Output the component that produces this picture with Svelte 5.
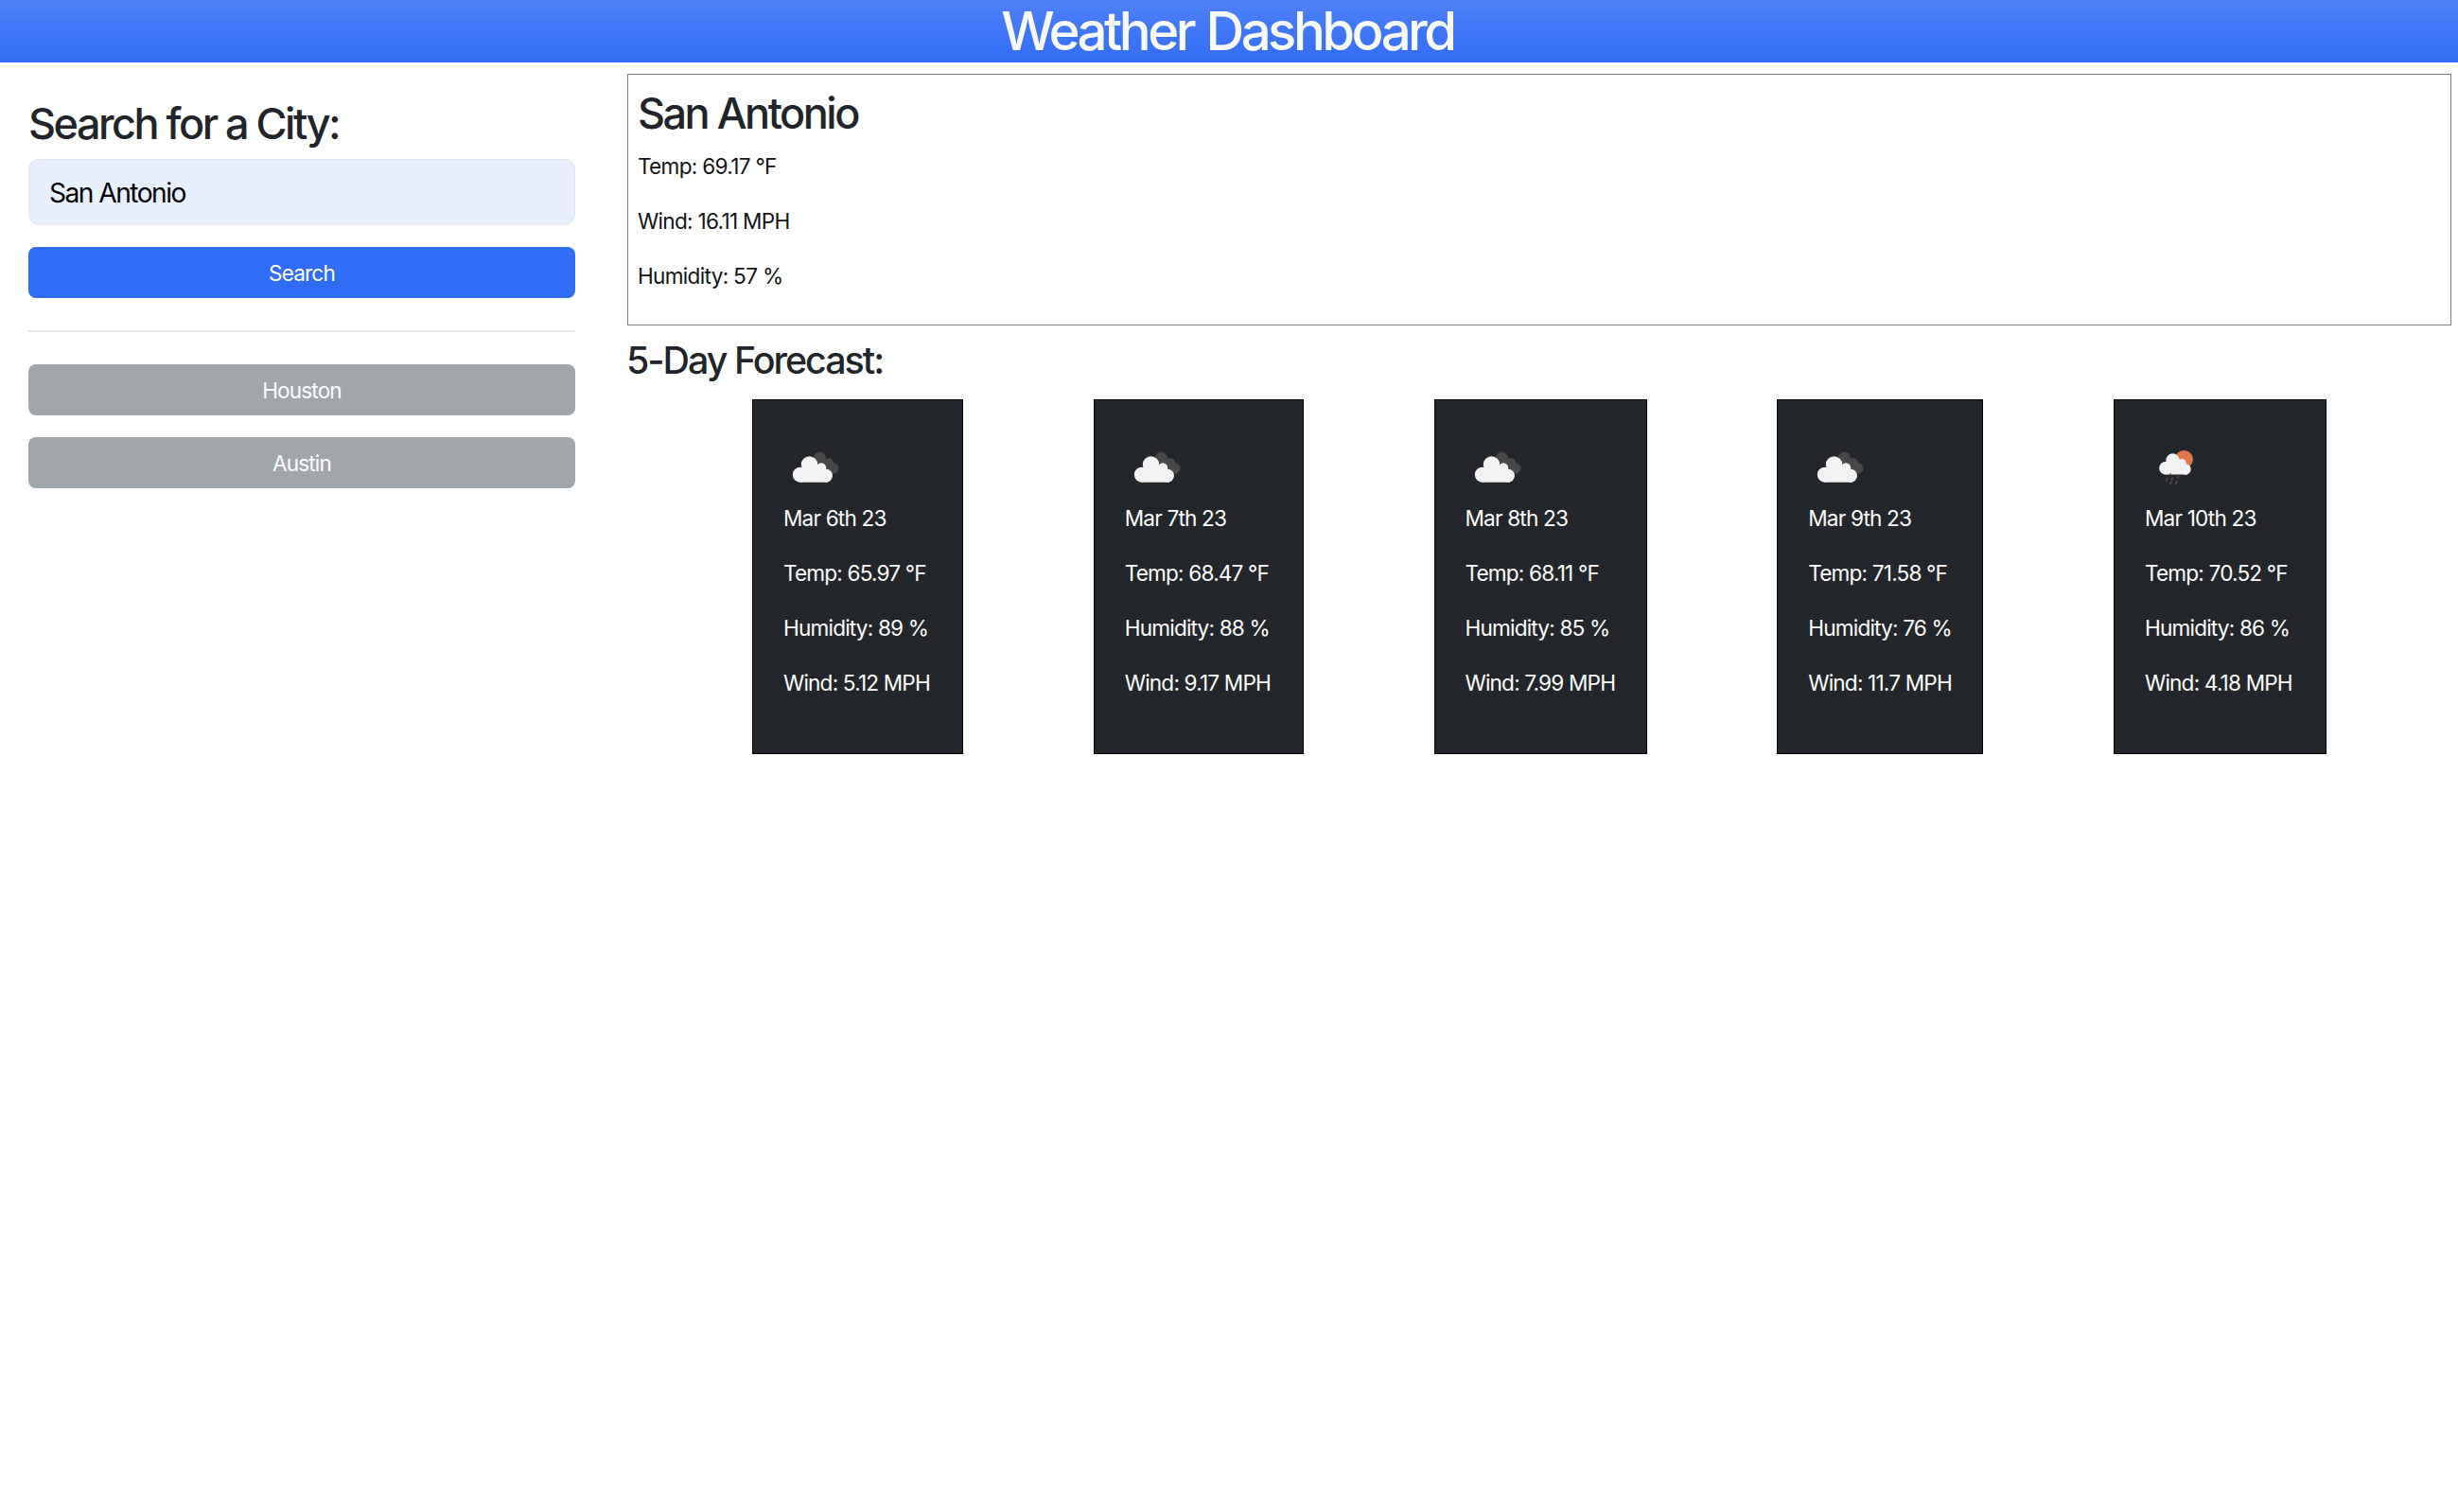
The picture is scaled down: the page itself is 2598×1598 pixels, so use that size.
<script>
  const history = ['Houston', 'Austin'];
  const forecast = [
    { date: 'Mar 6th 23', temp: '65.97', humidity: 89, wind: '5.12', icon: 'clouds', width: 223 },
    { date: 'Mar 7th 23', temp: '68.47', humidity: 88, wind: '9.17', icon: 'clouds', width: 222 },
    { date: 'Mar 8th 23', temp: '68.11', humidity: 85, wind: '7.99', icon: 'clouds', width: 225 },
    { date: 'Mar 9th 23', temp: '71.58', humidity: 76, wind: '11.7', icon: 'clouds', width: 218 },
    { date: 'Mar 10th 23', temp: '70.52', humidity: 86, wind: '4.18', icon: 'rain', width: 225 }
  ];
</script>

<header><h1>Weather Dashboard</h1></header>
<main>
  <aside>
    <h2>Search for a City:</h2>
    <input type="text" value="San Antonio" aria-label="City" />
    <button class="primary">Search</button>
    <hr />
    {#each history as city}
      <button class="past">{city}</button>
    {/each}
  </aside>
  <div class="results">
    <section class="today">
      <h2>San Antonio</h2>
      <p>Temp: 69.17 °F</p>
      <p>Wind: 16.11 MPH</p>
      <p>Humidity: 57 %</p>
    </section>
    <h3>5-Day Forecast:</h3>
    <div class="cards">
      {#each forecast as day}
        <article style:width="{day.width}px">
          {#if day.icon === 'clouds'}
            <svg viewBox="0 0 73 73" aria-hidden="true">
              <g fill="#484848">
                <circle cx="38.5" cy="26" r="6.5" />
                <circle cx="48" cy="31" r="5" />
                <circle cx="53" cy="37" r="5.5" />
                <path d="M36 26 L49 28 L54 42 L44 38Z" />
              </g>
              <g fill="#f2f2f2">
                <circle cx="17.8" cy="43.7" r="8" />
                <circle cx="27.5" cy="33" r="8.7" />
                <circle cx="40" cy="36.5" r="5.2" />
                <circle cx="45" cy="44.7" r="7" />
                <path d="M18 39 L27 31 L42 36 L47 42 V51.7 H17.8Z" />
              </g>
            </svg>
          {:else}
            <svg viewBox="0 0 73 73" aria-hidden="true">
              <circle cx="41.3" cy="27.5" r="9.6" fill="#e1764f" />
              <g fill="#f2f2f2">
                <circle cx="21.9" cy="36.8" r="6.8" />
                <circle cx="29.5" cy="28.5" r="7.2" />
                <circle cx="39.2" cy="31.3" r="4.4" />
                <circle cx="43" cy="38" r="5.7" />
                <path d="M21 33 L29 26 L41 30 L45 36 V43.6 H22Z" />
              </g>
              <path d="M26.5 42.2h1.2v1.5h-1.2z" fill="#23262a" />
              <path d="M24 47.5l-1.4 2.5M29.5 47l-1.3 2.3M35.5 45.8l-.8 1.3M27.8 51.8l-.9 1.5M33.7 50.7l-1.3 2.6" stroke="#4b4b4e" stroke-width="1.8" stroke-linecap="round" />
            </svg>
          {/if}
          <p>{day.date}</p>
          <p>Temp: {day.temp} °F</p>
          <p>Humidity: {day.humidity} %</p>
          <p>Wind: {day.wind} MPH</p>
        </article>
      {/each}
    </div>
  </div>
</main>

<style>
  :global(body) {
    margin: 0;
    background: #fff;
  }
  :global(#app) {
    font: 400 22.6px/35px Inter, sans-serif;
    color: #212529;
  }
  h1, h2, h3, p {
    margin: 0;
  }
  header {
    height: 66px;
    padding-right: 3px;
    background: linear-gradient(#4f81f8, #306cf4);
    color: #f8f9fa;
    text-align: center;
  }
  h1 {
    font-size: 56.3px;
    font-weight: 500;
    line-height: 66px;
    letter-spacing: -3.5px;
    word-spacing: 2px;
  }
  h2 {
    font-size: 45px;
    font-weight: 500;
    line-height: 56px;
    letter-spacing: -2.5px;
  }
  h3 {
    font-size: 39.4px;
    font-weight: 500;
    line-height: 48px;
    letter-spacing: -2px;
  }
  main {
    display: flex;
  }
  aside {
    box-sizing: border-box;
    width: 663px;
    padding: 37px 55px 0 30px;
    display: flex;
    flex-direction: column;
  }
  aside h2 {
    margin-bottom: 9px;
  }
  input {
    box-sizing: border-box;
    width: 100%;
    height: 70px;
    padding: 1px 22px 0 21px;
    border: 1px solid #e3e6ee;
    border-radius: 11px;
    background: #e8effd;
    color: #000;
    font: 400 28.2px Inter, sans-serif;
    letter-spacing: -1.55px;
  }
  button {
    height: 54px;
    margin-top: 23px;
    padding: 0;
    border: 0;
    border-radius: 8px;
    color: #fff;
    font: 400 22.6px Inter, sans-serif;
    letter-spacing: -0.85px;
  }
  .primary {
    background: #306cf4;
  }
  .past {
    background: #a1a6aa;
  }
  hr {
    width: 100%;
    height: 2px;
    margin: 34px 0 11px;
    border: 0;
    background: #e5e6e7;
  }
  .results {
    width: 1928px;
    padding-top: 12px;
  }
  .today {
    box-sizing: border-box;
    height: 266px;
    padding: 13px 10px;
    border: 1px solid #808080;
    color: #111315;
    letter-spacing: -0.7px;
  }
  .today h2 {
    margin-bottom: 10px;
    color: #212529;
  }
  p {
    margin-bottom: 23px;
    white-space: nowrap;
  }
  h3 {
    margin: 13px 0 0 -1px;
  }
  .cards {
    display: flex;
    justify-content: space-between;
    width: 1664px;
    margin: 17px 0 0 132px;
  }
  article {
    box-sizing: border-box;
    height: 375px;
    padding: 35px 32px;
    border: 1px solid #000;
    background: #23262a;
    color: #fff;
    letter-spacing: -0.82px;
  }
  svg {
    display: block;
    width: 73px;
    height: 73px;
    margin-bottom: -1px;
  }
</style>
